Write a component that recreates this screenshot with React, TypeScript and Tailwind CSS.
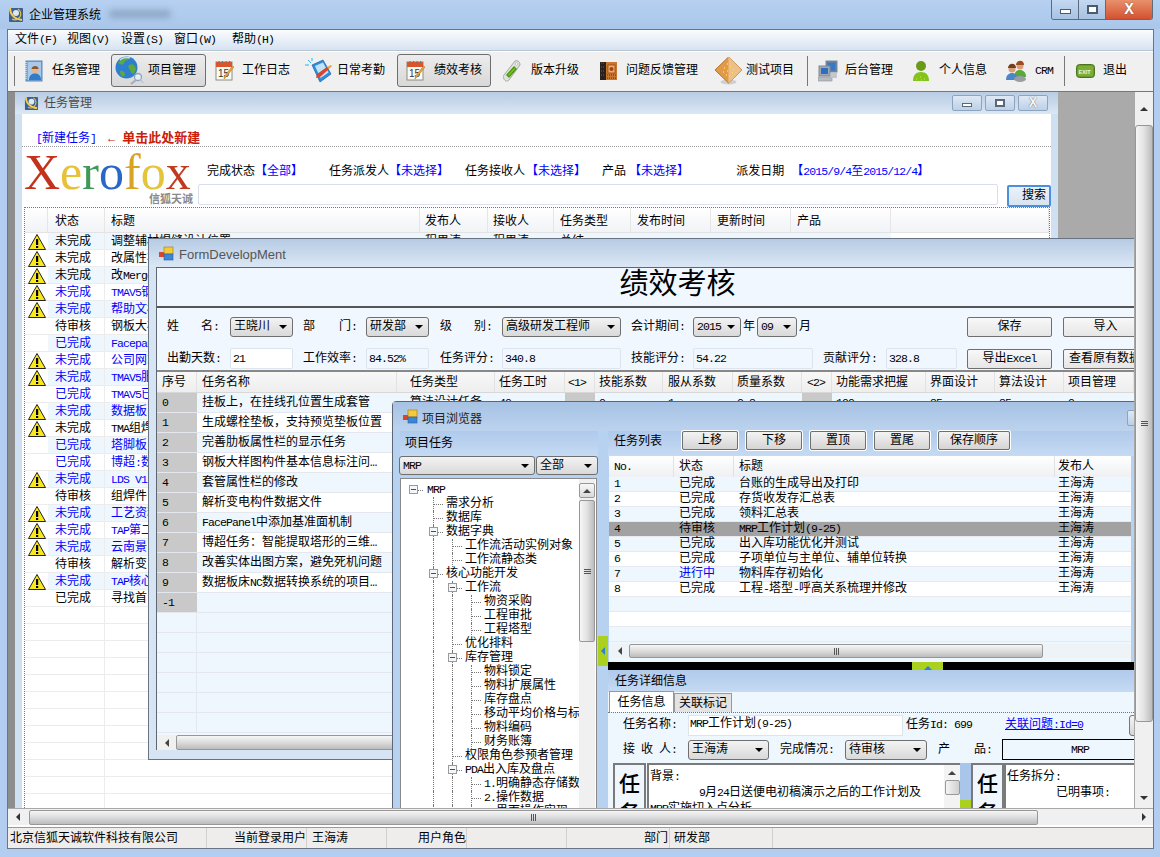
import React from "react";

const T = ({ s }: { s: string }) => (
  <>
    {s.split(/([\x20-\x7e]+)/).map((p, i) =>
      i % 2 === 1 ? (
        <span key={i} className="text-[11.5px] tracking-[-0.9px] whitespace-pre">{p}</span>
      ) : (
        <span key={i}>{p}</span>
      )
    )}
  </>
);

const Tri = ({ d = "down", className = "" }: { d?: "down" | "up" | "left" | "right"; className?: string }) => {
  const pts = { down: "0,0 8,0 4,4", up: "0,4 8,4 4,0", left: "5,0 5,8 1,4", right: "1,0 1,8 5,4" }[d];
  const vb = d === "down" || d === "up" ? "0 0 8 4" : "0 0 6 8";
  const cl = d === "down" || d === "up" ? "w-[8px] h-[4px]" : "w-[6px] h-[8px]";
  return (
    <svg viewBox={vb} className={cl + " shrink-0 " + className}>
      <polygon points={pts} fill="currentColor" />
    </svg>
  );
};

const AppIcon = ({ size = 16 }: { size?: number }) => (
  <svg width={size} height={size} viewBox="0 0 16 16" className="shrink-0">
    <rect x="1" y="1" width="14" height="14" rx="1" fill="#3d5f92" />
    <circle cx="8" cy="6" r="3" fill="#dfe7f2" />
    <path d="M2 1c0 6 4 11 12 12" stroke="#f3d24a" strokeWidth="2" fill="none" />
    <path d="M10 2c3 2 4 6 1 9-2 2-5 2-7 1" stroke="#e3c33a" strokeWidth="1.2" fill="none" />
  </svg>
);

const FormIcon = () => (
  <svg width="15" height="15" viewBox="0 0 15 15" className="shrink-0">
    <rect x="0" y="6" width="5" height="5" fill="#d8452c" />
    <rect x="5" y="1" width="9" height="7" fill="#f4c93a" stroke="#9a7b20" strokeWidth="0.6" />
    <rect x="5" y="8" width="9" height="6" fill="#3e86d4" stroke="#2a5c96" strokeWidth="0.6" />
  </svg>
);

const LedgerIcon = () => (
  <svg width="18" height="22" viewBox="0 0 18 22">
    <rect x="1" y="1" width="16" height="20" fill="#79a8dc" stroke="#5c86b8" />
    <rect x="3" y="2" width="13" height="18" fill="#a9c9ec" />
    <path d="M1 2v18" stroke="#fff" strokeDasharray="1 1" />
    <circle cx="10" cy="10" r="3.4" fill="#e8b48a" />
    <path d="M6.6 9c0-4 7-4 7 0z" fill="#8a5a2a" />
    <path d="M4 20c0-5 3-6.500 6-6.500s6 1.500 6 6.500z" fill="#2f7cc8" />
  </svg>
);
const GlobeIcon = () => (
  <svg width="30" height="30" viewBox="0 0 30 30">
    <circle cx="11.500" cy="11.500" r="11" fill="#2f7fd0" />
    <path d="M3 7c3-5 8-6 11-5-1 3-4 2-5 5s-4 1-6 0zM14 9c3-2 6 0 7 4-1 5-4 6-5 3s-4-4-2-7zM5 15c3-1 5 1 5 4l-2 2c-2-1-3-3-3-6z" fill="#5fa83a" />
    <path d="M5 4c3-3 8-3 10-2" stroke="#bfe0f8" strokeWidth="1.500" fill="none" />
    <circle cx="23" cy="21" r="3.500" fill="#e6eef6" stroke="#8fa3b8" strokeWidth="1.300" />
    <path d="M21 24l-5 4" stroke="#9fb0c2" strokeWidth="2.200" />
    <path d="M25 24c2 1 3 2 3 3" stroke="#b8c6d4" strokeWidth="1.500" fill="none" />
  </svg>
);
const CalIcon = () => (
  <svg width="20" height="22" viewBox="0 0 20 22">
    <rect x="1" y="2" width="16" height="18" fill="#fbfbf6" stroke="#8c8c80" />
    <rect x="1" y="2" width="16" height="5" fill="#d8562a" />
    <path d="M4 1v3M7.500 1v3M11 1v3M14.500 1v3" stroke="#777" strokeWidth="1" />
    <text x="3" y="17" fontSize="10" fill="#333" fontFamily="Liberation Sans">15</text>
    <path d="M19 7l-8 10-2 2 .5-3 8-10z" fill="#f0a238" stroke="#b06c18" strokeWidth="0.500" />
  </svg>
);
const NoteIcon = () => (
  <svg width="28" height="26" viewBox="0 0 28 26">
    <path d="M3 2l3 3M0 7h4M7 0v3" stroke="#33b0ea" strokeWidth="1" />
    <path d="M7 7l11-5 8 14-11 8z" fill="#2f8fdc" stroke="#1e5ea0" strokeWidth="0.700" />
    <path d="M10 8l8-3.500 5.500 10-8 5.500z" fill="#bfe4fa" />
    <path d="M12 16l10-7 2 2-9 8-4 1z" fill="#d8452c" />
    <path d="M22 9l4-2 1 1-3 3z" fill="#f0a238" />
  </svg>
);
const TagIcon = () => (
  <svg width="18" height="22" viewBox="0 0 18 22">
    <path d="M12 1c3-1 5 1 5 4L6 20c-2 2-4 1-5-1s-1-3 0-4z" fill="#dfe3df" stroke="#a4a8a4" />
    <path d="M11 7l2 2-7 8-2-2z" fill="#7cc422" stroke="#4f9a10" strokeWidth="1.500" />
    <circle cx="13.500" cy="4" r="1.300" fill="#fff" stroke="#999" strokeWidth="0.500" />
  </svg>
);
const BookIcon = () => (
  <svg width="18" height="22" viewBox="0 0 18 22">
    <rect x="0" y="2" width="6" height="18" fill="#2a201c" />
    <path d="M1 3h4M1 7h4M1 11h4M1 15h4" stroke="#c43a20" strokeDasharray="1 1" />
    <rect x="6" y="2" width="11" height="18" fill="#c9762e" />
    <rect x="8" y="5" width="7" height="8" fill="#e8b060" stroke="#8e3a18" strokeWidth="0.700" />
    <path d="M7 15h9M7 18h9" stroke="#6e2414" strokeDasharray="1 1" />
    <circle cx="11.500" cy="9" r="2" fill="#b23a1e" />
  </svg>
);
const DiamondIcon = () => (
  <svg width="27" height="28" viewBox="0 0 27 28">
    <ellipse cx="13.500" cy="25" rx="8" ry="2.500" fill="#cfcfcf" />
    <polygon points="13.500,0 27,13 13.500,26 0,13" fill="#e19a4c" stroke="#b8742c" />
    <polygon points="13.500,0 27,13 13.500,26" fill="#edc08a" />
    <path d="M12 7h1M9 11h1M15 10h1M12 14h1M18 13h1M8 15h1M14 19h1M17 16h1M11 18h1" stroke="#f6e13a" strokeWidth="1.500" />
  </svg>
);
const PCIcon = () => (
  <svg width="20" height="22" viewBox="0 0 20 22">
    <rect x="8" y="1" width="11" height="11" fill="#5e7ea6" stroke="#7c8ba0" />
    <rect x="10" y="3" width="7" height="7" fill="#3678c4" />
    <rect x="1" y="6" width="11" height="10" fill="#a0aab6" stroke="#7c8794" />
    <rect x="3" y="8" width="7" height="6" fill="#2e6ebc" />
    <rect x="0" y="17" width="14" height="4" fill="#b8bcc2" stroke="#8e9298" strokeWidth="0.600" />
    <rect x="13" y="13" width="6" height="5" fill="#c4c8cc" />
  </svg>
);
const PersonIcon = () => (
  <svg width="18" height="22" viewBox="0 0 18 22">
    <circle cx="9" cy="6" r="5" fill="#6a9a1a" />
    <path d="M1 21c0-6 3-9 8-9s8 3 8 9z" fill="#82c41a" />
    <path d="M4 19h1M8 17h1M12 19h1M9 20h1" stroke="#d6e83a" strokeWidth="1.200" />
  </svg>
);
const CrmIcon = () => (
  <svg width="22" height="24" viewBox="0 0 22 24">
    <circle cx="15" cy="7" r="3.500" fill="#d8a07a" />
    <path d="M11 6c0-5 8-6 8 0z" fill="#a04a22" />
    <path d="M9 18c0-5 3-7 6-7s6 2 6 7z" fill="#5aa83a" />
    <circle cx="7" cy="10" r="3.500" fill="#d8a07a" />
    <path d="M3 9c0-5 8-6 8 0z" fill="#6e4020" />
    <path d="M1 21c0-5 3-7 6-7s6 2 6 7z" fill="#4a86c8" />
    <ellipse cx="15" cy="20" rx="6" ry="3" fill="#9a9ea4" />
  </svg>
);
const ExitIcon = () => (
  <svg width="19" height="16" viewBox="0 0 19 16">
    <rect x="0.500" y="1.500" width="18" height="13" rx="3" fill="#6a9a30" stroke="#4c7420" />
    <rect x="2" y="3" width="15" height="10" rx="1" fill="#7cae34" />
    <text x="2.500" y="10.500" fontSize="5.500" fontWeight="700" fill="#f3f3d0" fontFamily="Liberation Sans">EXIT</text>
  </svg>
);

const tools = [
  { c: "w-[92px] pl-[6px]", ic: "w-[27px]", i: <LedgerIcon />, t: "任务管理" },
  { c: "w-[95px] pl-[3px] border border-[#6e6e6e] rounded-[3px] bg-linear-to-b from-[#ececec] to-[#d8d8d8]", ic: "w-[33px]", i: <GlobeIcon />, t: "项目管理" },
  { c: "w-[91px] pl-[9px]", ic: "w-[27px]", i: <CalIcon />, t: "工作日志" },
  { c: "w-[100px] pl-[8px]", ic: "w-[32px]", i: <NoteIcon />, t: "日常考勤" },
  { c: "w-[94px] pl-[8px] border border-[#6e6e6e] rounded-[3px] bg-linear-to-b from-[#ececec] to-[#d8d8d8]", ic: "w-[28px]", i: <CalIcon />, t: "绩效考核" },
  { c: "w-[101px] pl-[12px]", ic: "w-[28px]", i: <TagIcon />, t: "版本升级" },
  { c: "w-[115px] pl-[8px]", ic: "w-[26px]", i: <BookIcon />, t: "问题反馈管理" },
  { c: "w-[97px] pl-[8px]", ic: "w-[31px]", i: <DiamondIcon />, t: "测试项目" },
  { sep: "ml-[3px]" },
  { c: "w-[97px] pl-[10px]", ic: "w-[27px]", i: <PCIcon />, t: "后台管理" },
  { c: "w-[93px] pl-[7px]", ic: "w-[27px]", i: <PersonIcon />, t: "个人信息" },
  { c: "w-[64px] pl-[7px]", ic: "w-[30px]", i: <CrmIcon />, t: "CRM" },
  { sep: "ml-[2px]" },
  { c: "w-[75px] pl-[11px]", ic: "w-[27px]", i: <ExitIcon />, t: "退出" },
] as any[];

const Menu = [
  ["w-[52px]", "文件(F)"],
  ["w-[54px]", "视图(V)"],
  ["w-[53px]", "设置(S)"],
  ["w-[58px]", "窗口(W)"],
  ["w-[60px]", "帮助(H)"],
];

const GlassBtn = ({ kind }: { kind: "min" | "max" | "close" }) => (
  <div className="w-[30px] h-[16px] border border-[#8ea3bd] rounded-[2px] bg-linear-to-b from-[#dfe9f5] to-[#bcd0e6] flex items-center justify-center shrink-0">
    {kind === "min" && <div className="w-[10px] h-[4px] border border-[#59677a] bg-white mt-[3px]" />}
    {kind === "max" && <div className="w-[10px] h-[8px] border-2 border-[#59677a] bg-white" />}
    {kind === "close" && <span className="text-[14px] font-bold leading-none text-[#f5f8fb] [text-shadow:0_0_1px_#333]">X</span>}
  </div>
);

const ThumbH = ({ className = "" }: { className?: string }) => (
  <div className={"h-[15px] border border-[#979797] rounded-[2px] bg-linear-to-b from-[#f6f6f6] via-[#dcdcdc] to-[#bcbcbc] flex items-center justify-center gap-[1px] " + className}>
    <div className="w-[1px] h-[7px] bg-[#555]" />
    <div className="w-[1px] h-[7px] bg-[#555]" />
    <div className="w-[1px] h-[7px] bg-[#555]" />
  </div>
);
const ThumbV = ({ className = "" }: { className?: string }) => (
  <div className={"w-full border border-[#979797] rounded-[2px] bg-linear-to-r from-[#f6f6f6] via-[#e2e2e2] to-[#bcbcbc] flex flex-col items-center justify-center gap-[1px] " + className}>
    <div className="h-[1px] w-[7px] bg-[#555]" />
    <div className="h-[1px] w-[7px] bg-[#555]" />
    <div className="h-[1px] w-[7px] bg-[#555]" />
  </div>
);

const Sel = ({ s, className = "" }: { s: string; className?: string }) => (
  <div className={"h-[20px] shrink-0 flex items-center justify-between pl-[3px] pr-[5px] border border-[#6f6f6f] rounded-[3px] bg-linear-to-b from-[#f3f3f3] to-[#d9d9d9] whitespace-nowrap overflow-hidden " + className}>
    <span><T s={s} /></span>
    <Tri className="text-black" />
  </div>
);
const Btn = ({ s, className = "" }: { s: string; className?: string }) => (
  <div className={"shrink-0 flex items-center justify-center border border-[#6f6f6f] rounded-[2px] bg-linear-to-b from-[#f8f8f8] to-[#e6e6e6] whitespace-nowrap overflow-hidden " + className}>
    <T s={s} />
  </div>
);
const Lbl = ({ s, className = "" }: { s: string; className?: string }) => (
  <div className={"shrink-0 whitespace-nowrap " + className}><T s={s} /></div>
);
const Inp = ({ s, className = "" }: { s: string; className?: string }) => (
  <div className={"h-[21px] shrink-0 flex items-center pl-[2px] border border-[#dce4ee] rounded-[2px] " + className}><T s={s} /></div>
);

const Warn = () => (
  <svg width="18" height="16" viewBox="0 0 18 16" className="shrink-0">
    <polygon points="9,0.500 17.500,15.500 0.500,15.500" fill="#f8e81c" stroke="#222" strokeWidth="1" />
    <rect x="8" y="5" width="2.200" height="6" fill="#000" />
    <rect x="8" y="12" width="2.200" height="2" fill="#000" />
  </svg>
);

const taskCols = ["w-[23px]", "w-[57px] pl-[7px]", "w-[315px] pl-[6px]", "w-[68px] pl-[5px]", "w-[66px] pl-[5px]", "w-[77px] pl-[6px]", "w-[80px] pl-[6px]", "w-[80px] pl-[6px]", "w-[100px] pl-[6px]", "flex-1"];
const taskHead = ["", "状态", "标题", "发布人", "接收人", "任务类型", "发布时间", "更新时间", "产品", ""];
const taskRows: [boolean, string, string, boolean][] = [
  [true, "未完成", "调整辅材焊缝设计位置", false],
  [true, "未完成", "改属性栏", false],
  [true, "未完成", "改Merge", false],
  [true, "未完成", "TMAV5钢", true],
  [true, "未完成", "帮助文档", true],
  [false, "待审核", "钢板大样", false],
  [false, "已完成", "Facepanel", true],
  [true, "未完成", "公司网站", true],
  [true, "未完成", "TMAV5服", true],
  [false, "已完成", "TMAV5已", true],
  [true, "未完成", "数据板", true],
  [true, "未完成", "TMA组焊", false],
  [false, "已完成", "塔脚板", true],
  [false, "已完成", "博超:数", true],
  [true, "未完成", "LDS V1", true],
  [false, "待审核", "组焊件", false],
  [true, "未完成", "工艺资料", true],
  [true, "未完成", "TAP第二", true],
  [true, "未完成", "云南景", true],
  [false, "待审核", "解析变电", false],
  [true, "未完成", "TAP核心", true],
  [false, "已完成", "寻找首", false],
];

const formHead = ["序号", "任务名称", "任务类型", "任务工时", "<1>", "技能系数", "服从系数", "质量系数", "<2>", "功能需求把握", "界面设计", "算法设计", "项目管理"];
const formCols2 = ["w-[40px] pl-[5px]", "w-[200px] pl-[5px]", "w-[98px] pl-[13px]", "w-[70px] pl-[4px]", "w-[30px] pl-[3px]", "w-[68px] pl-[4px]", "w-[70px] pl-[5px]", "w-[69px] pl-[4px]", "w-[30px] pl-[5px]", "w-[94px] pl-[4px]", "w-[69px] pl-[4px]", "w-[69px] pl-[4px]", "w-[70px] pl-[4px]"];
const names = [
  "挂板上，在挂线孔位置生成套管",
  "生成螺栓垫板，支持预览垫板位置",
  "完善肋板属性栏的显示任务",
  "钢板大样图构件基本信息标注问…",
  "套管属性栏的修改",
  "解析变电构件数据文件",
  "FacePanel中添加基准面机制",
  "博超任务：智能提取塔形的三维…",
  "改善实体出图方案，避免死机问题",
  "数据板床NC数据转换系统的项目…",
  "",
];
const firstRow = ["算法设计任务", "40", "", "0", "1", "0.8", "", "100", "85", "85", "0"];

const tree: [number, string, boolean?][] = [
  [0, "MRP", true],
  [1, "需求分析"],
  [1, "数据库"],
  [1, "数据字典", true],
  [2, "工作流活动实例对象"],
  [2, "工作流静态类"],
  [1, "核心功能开发", true],
  [2, "工作流", true],
  [3, "物资采购"],
  [3, "工程审批"],
  [3, "工程塔型"],
  [2, "优化排料"],
  [2, "库存管理", true],
  [3, "物料锁定"],
  [3, "物料扩展属性"],
  [3, "库存盘点"],
  [3, "移动平均价格与标准价"],
  [3, "物料编码"],
  [3, "财务账簿"],
  [2, "权限角色参预者管理"],
  [2, "PDA出入库及盘点", true],
  [3, "1.明确静态存储数据"],
  [3, "2.操作数据"],
  [3, "3.界面操作实现"],
];

const listRows = [
  ["1", "已完成", "台账的生成导出及打印"],
  ["2", "已完成", "存货收发存汇总表"],
  ["3", "已完成", "领料汇总表"],
  ["4", "待审核", "MRP工作计划(9-25)"],
  ["5", "已完成", "出入库功能优化并测试"],
  ["6", "已完成", "子项单位与主单位、辅单位转换"],
  ["7", "进行中", "物料库存初始化"],
  ["8", "已完成", "工程-塔型-呼高关系梳理并修改"],
  ["", "", ""],
  ["", "", ""],
  ["", "", ""],
];

const BigLabel = () => (
  <div className="w-[33px] shrink-0 border-2 border-[#7a7a7a] bg-[#eff6fe] flex flex-col items-center pt-[6px] text-[21px] leading-[29px] text-black font-medium overflow-hidden">
    <span>任</span>
    <span>务</span>
  </div>
);

const TaskWindow = () => (
  <div className="absolute left-0 top-0 w-[1050px] h-[760px] flex">
    <div className="w-[7px] bg-[#8d8d8d] shrink-0" />
    <div className="flex-1 flex flex-col bg-[#cfe0f3] min-w-0">
      <div className="h-[22px] shrink-0 flex items-center pl-[9px] bg-linear-to-b from-[#b8cce3] to-[#dbe7f5]">
        <AppIcon size={15} />
        <span className="ml-[5px] text-[#4a4a4a] pt-[1px]">任务管理</span>
        <div className="ml-auto flex gap-[3px] pr-[10px]">
          <GlassBtn kind="min" />
          <GlassBtn kind="max" />
          <GlassBtn kind="close" />
        </div>
      </div>
      <div className="flex-1 mx-[7px] bg-white flex flex-col min-h-0 overflow-hidden">
        <div className="h-[33px] shrink-0 flex items-end pl-[14px] border-b border-dotted border-[#999]">
          <span className="text-[#0000ff]"><T s="[新建任务]" /></span>
          <span className="ml-[12px] text-[#c8200a] font-bold">←</span>
          <span className="ml-[7px] text-[#c8200a] font-bold text-[13px]">单击此处新建</span>
        </div>
        <div className="h-[60px] shrink-0 flex">
          <div className="w-[174px] ml-[2px] shrink-0 flex flex-col">
            <div className="font-['Liberation_Serif',serif] text-[50px] leading-[46px] mt-[2px] tracking-[0px] whitespace-nowrap">
              <span className="text-[#c4321c]">X</span>
              <span className="text-[#e6c23a]">e</span>
              <span className="text-[#3f9a5a]">r</span>
              <span className="text-[#2a68c8]">o</span>
              <span className="text-[#d9a521]">f</span>
              <span className="text-[#e4c43a]">o</span>
              <span className="text-[#c03a22]">x</span>
            </div>
            <div className="text-right pr-[5px] text-[11px] leading-[11px] font-bold text-[#8a8a8a]">信狐天诚</div>
          </div>
          <div className="flex-1 flex flex-col min-w-0">
            <div className="flex mt-[18px] h-[14px] pl-[9px] whitespace-nowrap">
              <span>完成状态</span>
              <span className="text-[#0000ff] mr-[26px]">【全部】</span>
              <span>任务派发人</span>
              <span className="text-[#0000ff] mr-[16px]">【未选择】</span>
              <span>任务接收人</span>
              <span className="text-[#0000ff] ml-[1px] mr-[16px]">【未选择】</span>
              <span>产品</span>
              <span className="text-[#0000ff] ml-[3px] mr-[47px]">【未选择】</span>
              <span>派发日期</span>
              <span className="text-[#0000ff] ml-[7px]"><T s="【2015/9/4至2015/12/4】" /></span>
            </div>
            <div className="flex mt-[5px]">
              <div className="w-[802px] h-[21px] border border-[#d6dfeb] rounded-[2px] bg-white" />
              <div className="ml-[9px] w-[44px] h-[22px] mt-[1px] border-2 border-[#4a90dc] rounded-[2px] bg-linear-to-b from-[#eaf2fb] to-[#d8e4f0] pl-[13px] flex items-center whitespace-nowrap">搜索</div>
            </div>
          </div>
        </div>
        <div className="ml-[2px] w-[1026px] flex-1 border border-dotted border-[#777] border-b-0 min-h-0 overflow-hidden">
          <div className="h-[25px] flex items-center bg-linear-to-b from-white to-[#f1f3f6] border-b border-[#e3e3e3]">
            {taskHead.map((h, i) => (
              <div key={i} className={"h-full flex items-center pt-[3px] border-r border-[#e6e6e6] " + taskCols[i]}>{h}</div>
            ))}
          </div>
          {Array.from({ length: 34 }).map((_, r) => {
            const row = taskRows[r];
            const alt = row && r % 2 === 0;
            return (
              <div key={r} className={"h-[17px] flex border-b border-[#ececec] " + (row && row[3] ? "text-[#0000ff]" : "text-black")}>
                <div className={"h-full flex items-center justify-center pt-[1px] " + taskCols[0]}>{row && row[0] && <Warn />}</div>
                <div className={"h-full flex items-center pt-[1px] border-r border-[#ececec] " + taskCols[1] + (alt ? " bg-[#eef6fe]" : "")}>{row && row[1]}</div>
                <div className={"h-full flex items-center pt-[1px] " + taskCols[2] + (alt ? " bg-[#eef6fe]" : "")}>{row && <T s={row[2]} />}</div>
                <div className={"h-full flex items-center pt-[1px] " + taskCols[3] + (alt ? " bg-[#eef6fe]" : "")}>{r === 0 && "程思涛"}</div>
                <div className={"h-full flex items-center pt-[1px] " + taskCols[4] + (alt ? " bg-[#eef6fe]" : "")}>{r === 0 && "程思涛"}</div>
                <div className={"h-full flex items-center pt-[1px] " + taskCols[5] + (alt ? " bg-[#eef6fe]" : "")}>{r === 0 && "总结"}</div>
                <div className={"h-full " + taskCols[6] + (alt ? " bg-[#eef6fe]" : "")} />
                <div className={"h-full " + taskCols[7] + (alt ? " bg-[#eef6fe]" : "")} />
                <div className={"h-full " + taskCols[8] + (alt ? " bg-[#eef6fe]" : "")} />
              </div>
            );
          })}
        </div>
      </div>
    </div>
  </div>
);

const FormWindow = () => (
  <div className="absolute left-[140px] top-[146px] w-[1059px] h-[522px] border border-[#687484] bg-[#d6e4f4] flex flex-col">
    <div className="h-[28px] shrink-0 flex items-center pl-[10px] bg-linear-to-b from-[#b6cbe3] to-[#dbe7f5]">
      <FormIcon />
      <span className="ml-[5px] pt-[3px] font-['Liberation_Sans',sans-serif] text-[13px] text-[#555] whitespace-nowrap">FormDevelopMent</span>
      <div className="ml-[928px]"><GlassBtn kind="min" /></div>
    </div>
    <div className="ml-[7px] mr-[8px] h-[483px] border-t border-l border-[#5e6875] bg-[#f0f7ff] flex flex-col overflow-hidden">
      <div className="h-[40px] shrink-0 border-b-[2px] border-[#555] flex items-center justify-center text-[29px] leading-[36px] text-black">绩效考核</div>
      <div className="mt-[9px] h-[20px] shrink-0 flex items-center pl-[10px] whitespace-nowrap">
        <div className="w-[53px] mr-[10px] flex justify-between shrink-0"><span>姓</span><span className="mr-[1px]"><T s="名:" /></span></div>
        <Sel s="王晓川" className="w-[63px] mr-[10px]" />
        <div className="w-[54px] mr-[9px] flex justify-between shrink-0"><span>部</span><span><T s="门:" /></span></div>
        <Sel s="研发部" className="w-[63px] mr-[11px]" />
        <div className="w-[52px] mr-[10px] flex justify-between shrink-0"><span>级</span><span><T s="别:" /></span></div>
        <Sel s="高级研发工程师" className="w-[119px] mr-[10px]" />
        <Lbl s="会计期间:" className="w-[54px] mr-[8px]" />
        <Sel s="2015" className="w-[48px] mr-[2px]" />
        <Lbl s="年" className="w-[12px] mr-[2px]" />
        <Sel s="09" className="w-[40px] mr-[2px]" />
        <Lbl s="月" className="w-[12px] mr-[156px]" />
        <Btn s="保存" className="w-[85px] h-[20px] mr-[11px]" />
        <Btn s="导入" className="w-[85px] h-[20px]" />
      </div>
      <div className="mt-[11px] h-[21px] shrink-0 flex items-center pl-[10px] whitespace-nowrap">
        <Lbl s="出勤天数:" className="w-[53px] mr-[10px]" />
        <Inp s="21" className="w-[63px] mr-[10px] bg-white" />
        <Lbl s="工作效率:" className="w-[54px] mr-[9px]" />
        <Inp s="84.52%" className="w-[63px] mr-[11px]" />
        <Lbl s="任务评分:" className="w-[52px] mr-[10px]" />
        <Inp s="340.8" className="w-[119px] mr-[10px]" />
        <Lbl s="技能评分:" className="w-[54px] mr-[8px]" />
        <Inp s="54.22" className="w-[120px] mr-[10px]" />
        <Lbl s="贡献评分:" className="w-[54px] mr-[9px]" />
        <Inp s="328.8" className="w-[71px] mr-[10px]" />
        <Btn s="导出Excel" className="w-[85px] h-[20px] mr-[11px]" />
        <Btn s="查看原有数据" className="w-[85px] h-[20px] justify-start pl-[5px]" />
      </div>
      <div className="mt-[1px] h-[364px] shrink-0 border-t-2 border-[#888] flex flex-col">
        <div className="h-[21px] shrink-0 flex bg-linear-to-b from-[#f8f8f8] to-[#eeeeee] border-b border-[#d8d8d8]">
          {formHead.map((h, i) => (
            <div key={i} className={"shrink-0 h-full flex items-center pt-[1px] border-r border-[#e2e2e2] whitespace-nowrap " + formCols2[i]}><T s={h} /></div>
          ))}
        </div>
        {Array.from({ length: 17 }).map((_, r) => (
          <div key={r} className={"h-[20px] shrink-0 flex border-b border-[#e4e8ee] " + (r % 2 === 0 || r > 10 ? "bg-[#eef6fe]" : "bg-white")}>
            <div className={"shrink-0 h-full flex items-center " + formCols2[0] + (r <= 10 ? " bg-[#c9c9c9]" : " border-r border-[#e4e8ee]")}>{r <= 10 ? <T s={r === 10 ? "-1" : String(r)} /> : null}</div>
            <div className={"shrink-0 h-full flex items-center whitespace-nowrap " + formCols2[1]}><T s={names[r] || ""} /></div>
            {r === 0 && firstRow.map((v, i) => (
              <div key={i} className={"shrink-0 h-full flex items-center whitespace-nowrap " + formCols2[i + 2] + (v === "" ? " bg-[#c9c9c9]" : "")}><T s={v} /></div>
            ))}
          </div>
        ))}
        <div className="mt-[2px] h-[15px] shrink-0 flex items-center bg-[#f0f0f0]">
          <div className="w-[19px] flex justify-center text-[#444]"><Tri d="left" /></div>
          <ThumbH className="w-[900px]" />
        </div>
      </div>
    </div>
  </div>
);

const TreeRow = ({ l, s, e }: { l: number; s: string; e?: boolean }) => (
  <div className="h-[14px] flex pl-[13px] whitespace-nowrap">
    {l > 0 && <div className="w-[19px] shrink-0" />}
    {Array.from({ length: Math.max(l - 1, 0) }).map((_, i) => (
      <div key={i} className="w-[19px] shrink-0 h-full border-l border-dotted border-[#777]" />
    ))}
    <div className={"relative shrink-0 w-[12px] h-full flex items-center " + (l > 0 ? "border-l border-dotted border-[#777]" : "")}>
      <div className="w-[9px] border-t border-dotted border-[#777]" />
      {e && (
        <div className="absolute -left-[5px] top-[2px] w-[9px] h-[9px] border border-[#9a9a9a] bg-[#f4f7fa] flex items-center justify-center">
          <div className="w-[5px] h-[1px] bg-[#2050b0]" />
        </div>
      )}
    </div>
    <span className="ml-[1px]"><T s={s} /></span>
  </div>
);

const BrowserWindow = () => (
  <div className="absolute left-[384px] top-[309px] w-[800px] h-[440px] border border-[#5e6875] rounded-t-[4px] bg-[#b7d1f1] flex flex-col">
    <div className="h-[29px] shrink-0 flex items-center pl-[10px] bg-linear-to-b from-[#a6c2e4] to-[#bcd3ee]">
      <FormIcon />
      <span className="ml-[4px] text-[#222] mt-[6px]">项目浏览器</span>
      <div className="ml-[645px] mt-[3px]"><GlassBtn kind="min" /></div>
    </div>
    <div className="flex-1 flex pl-[6px] min-h-0">
      <div className="w-[199px] shrink-0 flex flex-col">
        <div className="h-[25px] shrink-0 flex items-center pl-[5px] ml-[1px] bg-linear-to-b from-[#b0caec] to-[#c5daf3]">项目任务</div>
        <div className="flex gap-[1px] h-[18px] shrink-0">
          <Sel s="MRP" className="w-[136px] !h-[19px]" />
          <Sel s="全部" className="w-[62px] !h-[19px]" />
        </div>
        <div className="mt-[4px] ml-[1px] w-[197px] flex-1 border border-[#8a8a8a] bg-white flex min-h-0 overflow-hidden">
          <div className="w-[178px] shrink-0 pt-[4px] overflow-hidden">
            {tree.map(([l, s, e], i) => <TreeRow key={i} l={l} s={s} e={e} />)}
          </div>
          <div className="w-[16px] shrink-0 pt-[4px] flex flex-col bg-[#f0f0f0]">
            <div className="h-[15px] border border-[#979797] rounded-[2px] bg-linear-to-b from-[#f8f8f8] to-[#dadada] flex items-center justify-center text-[#444]"><Tri d="up" /></div>
            <ThumbV className="h-[142px] mt-[2px]" />
          </div>
        </div>
      </div>
      <div className="w-[10px] shrink-0 flex flex-col pt-[205px]">
        <div className="h-[30px] w-[10px] bg-[#a9d11e] flex items-center justify-center text-[#2f7fd6]"><Tri d="left" /></div>
      </div>
      <div className="w-[570px] shrink-0 flex flex-col">
        <div className="h-[25px] shrink-0 flex items-start bg-linear-to-b from-[#b0caec] to-[#c5daf3]">
          <span className="ml-[6px] mt-[4px] w-[68px]">任务列表</span>
          <Btn s="上移" className="w-[56px] h-[19px] mr-[8px] !from-[#f3f3f3] !to-[#d5d5d5] ring-1 ring-white" />
          <Btn s="下移" className="w-[56px] h-[19px] mr-[8px] !from-[#f3f3f3] !to-[#d5d5d5] ring-1 ring-white" />
          <Btn s="置顶" className="w-[56px] h-[19px] mr-[8px] !from-[#f3f3f3] !to-[#d5d5d5] ring-1 ring-white" />
          <Btn s="置尾" className="w-[56px] h-[19px] mr-[8px] !from-[#f3f3f3] !to-[#d5d5d5] ring-1 ring-white" />
          <Btn s="保存顺序" className="w-[72px] h-[19px] !from-[#f3f3f3] !to-[#d5d5d5] ring-1 ring-white" />
        </div>
        <div className="ml-[1px] w-[522px] h-[188px] shrink-0 bg-[#eef6fe] flex flex-col overflow-hidden">
          <div className="h-[21px] shrink-0 flex items-center bg-linear-to-b from-white to-[#eef0f3]">
            <div className="w-[65px] pl-[5px] border-r border-[#e2e2e2] h-full flex items-center"><T s="No." /></div>
            <div className="w-[60px] pl-[5px] border-r border-[#e2e2e2] h-full flex items-center">状态</div>
            <div className="w-[321px] pl-[5px] border-r border-[#e2e2e2] h-full flex items-center">标题</div>
            <div className="w-[76px] pl-[3px] h-full flex items-center">发布人</div>
          </div>
          {listRows.map((r, i) => (
            <div key={i} className={"h-[15px] shrink-0 flex items-center border-b border-[#e6eaf0] " + (i === 3 ? "bg-[#a2a2a2]" : i % 2 === 0 ? "bg-[#eef6fe]" : "bg-white")}>
              <div className="w-[65px] pl-[5px]"><T s={r[0]} /></div>
              <div className={"w-[60px] pl-[5px] " + (i === 6 ? "text-[#0000ff]" : "")}>{r[1]}</div>
              <div className="w-[321px] pl-[5px] whitespace-nowrap"><T s={r[2]} /></div>
              <div className="w-[76px] pl-[3px]">{r[0] && "王海涛"}</div>
            </div>
          ))}
        </div>
        <div className="ml-[1px] w-[522px] h-[14px] shrink-0 flex items-center bg-[#eef3f8] pl-[8px]">
          <div className="w-[12px] text-[#444]"><Tri d="left" /></div>
          <ThumbH className="w-[414px] !h-[14px]" />
        </div>
        <div className="h-[4px] shrink-0 ml-[1px] w-[522px] bg-[#eef6fe]" />
        <div className="h-[8px] shrink-0 bg-black flex">
          <div className="ml-[304px] w-[31px] h-full bg-[#a9d11e] flex items-end justify-center text-[#2f7fd6]"><Tri d="up" /></div>
        </div>
        <div className="h-[22px] shrink-0 flex items-center pl-[7px] pt-[2px] bg-linear-to-b from-[#b0caec] to-[#c5daf3]">任务详细信息</div>
        <div className="h-[21px] shrink-0 flex items-end border-b border-dotted border-[#777] bg-[#eef6fe]">
          <div className="ml-[1px] w-[65px] h-[21px] pt-[2px] bg-white border border-b-0 border-[#999] flex items-center justify-center">任务信息</div>
          <div className="w-[58px] h-[19px] pt-[2px] bg-[#e3e3e3] border border-b-0 border-[#999] flex items-center justify-center">关联标记</div>
        </div>
        <div className="flex-1 pl-[5px] bg-[#eef6fe] flex flex-col">
          <div className="flex items-center h-[24px] shrink-0 pl-[10px] whitespace-nowrap">
            <Lbl s="任务名称:" className="w-[65px]" />
            <div className="w-[215px] h-[21px] shrink-0 bg-white border border-[#dce4ee] pl-[1px] pt-[1px]"><T s="MRP工作计划(9-25)" /></div>
            <Lbl s="任务Id: 699" className="ml-[3px] w-[99px]" />
            <span className="text-[#0000ff] underline w-[124px] shrink-0"><T s="关联问题:Id=0" /></span>
            <div className="w-[60px] h-[21px] border border-[#777] rounded-[3px] bg-linear-to-b from-[#f5f5f5] to-[#d5d5d5] shrink-0" />
          </div>
          <div className="flex items-center h-[25px] shrink-0 pl-[10px] whitespace-nowrap">
            <Lbl s="接 收 人:" className="w-[65px]" />
            <Sel s="王海涛" className="w-[81px] mr-[11px]" />
            <Lbl s="完成情况:" className="w-[65px]" />
            <Sel s="待审核" className="w-[82px] mr-[11px]" />
            <div className="w-[55px] flex justify-between shrink-0 pr-[1px] mr-[9px]"><span>产</span><span><T s="品:" /></span></div>
            <div className="w-[156px] h-[21px] border border-black bg-[#eef6fe] flex items-center justify-center shrink-0"><T s="MRP" /></div>
          </div>
          <div className="flex h-[60px] shrink-0 mt-[1px]">
            <BigLabel />
            <div className="ml-[1px] w-[313px] border-2 border-[#7a7a7a] border-r-0 bg-white flex shrink-0 overflow-hidden">
              <div className="flex-1 pt-[4px] leading-[16px] whitespace-nowrap">
                <div className="pl-[1px]"><T s="背景:" /></div>
                <div className="pl-[50px]"><T s="9月24日送便电初稿演示之后的工作计划及" /></div>
                <div className="pl-[1px]"><T s="MRP实施切入点分析" /></div>
              </div>
              <div className="w-[16px] shrink-0 bg-[#f3f3f3] flex flex-col items-center pt-[6px] text-[#444]">
                <Tri d="up" />
                <div className="mt-[5px] w-[15px] h-[15px] border border-[#999] rounded-[2px] bg-linear-to-r from-[#f5f5f5] to-[#cfcfcf]" />
              </div>
            </div>
            <div className="w-[11px] shrink-0 bg-[#a9c6ea] flex flex-col"><div className="mt-[37px] h-[10px] bg-[#a9d11e]" /></div>
            <BigLabel />
            <div className="w-[200px] border-2 border-[#7a7a7a] bg-white pt-[4px] leading-[16px] whitespace-nowrap shrink-0 overflow-hidden">
              <div className="pl-[1px]"><T s="任务拆分:" /></div>
              <div className="pl-[50px]"><T s="已明事项:" /></div>
            </div>
          </div>
        </div>
      </div>
    </div>
  </div>
);

const statusCells = [
  ["w-[199px] pl-[2px]", "北京信狐天诚软件科技有限公司"],
  ["w-[100px] pl-[27px]", "当前登录用户"],
  ["w-[80px] pl-[5px]", "王海涛"],
  ["w-[80px] pl-[31px]", "用户角色"],
  ["w-[100px]", ""],
  ["w-[103px] pl-[77px]", "部门"],
  ["w-[103px] pl-[4px]", "研发部"],
];

export default function App() {
  return (
    <div lang="zh-CN" className="relative w-[1160px] h-[857px] overflow-hidden bg-[#b2cdef] flex flex-col font-['Liberation_Mono','Noto_Sans_CJK_SC',monospace] text-[12px] leading-[14px] text-black">
      <div className="h-[29px] shrink-0 flex items-start pl-[8px] bg-linear-to-b from-[#b5d0f1] to-[#aac7ea]">
        <div className="mt-[7px]"><AppIcon /></div>
        <span className="ml-[5px] mt-[9px]">企业管理系统</span>
        <div className="ml-[8px] mt-[10px] w-[62px] h-[8px] rounded-full bg-[#8ea6c6] blur-[3px]" />
        <div className="ml-auto mr-[7px] flex h-[20px] border border-t-0 border-[#5d6b7d] rounded-b-[3px] overflow-hidden">
          <div className="w-[27px] border-r border-[#5d6b7d] flex items-center justify-center bg-linear-to-b from-[#c3d8f1] to-[#a8c2e2]"><div className="w-[11px] h-[5px] border border-[#4d5a6a] bg-white mt-[4px]" /></div>
          <div className="w-[27px] border-r border-[#5d6b7d] flex items-center justify-center bg-linear-to-b from-[#c3d8f1] to-[#a8c2e2]"><div className="w-[11px] h-[9px] border-2 border-[#4d5a6a] bg-white" /></div>
          <div className="w-[46px] flex items-center justify-center bg-linear-to-b from-[#e8906c] to-[#d2502e]"><span className="text-[16px] font-bold leading-none text-white [text-shadow:0_0_1px_#333]">X</span></div>
        </div>
      </div>

      <div className="ml-[7px] w-[1147px] h-[820px] shrink-0 border border-[#6a7482] flex flex-col bg-[#f0f0f0]">
        <div className="h-[21px] shrink-0 flex items-center pl-[7px] bg-linear-to-b from-[#fbfcfe] to-[#d6e3f1] border-b border-[#b8c4d2] whitespace-nowrap">
          {Menu.map(([w, s]) => (
            <div key={s} className={w + " shrink-0"}><T s={s} /></div>
          ))}
        </div>
        <div className="h-[41px] shrink-0 flex items-start pl-[6px] pt-[2px] border-t border-[#fff] border-b border-b-[#777] bg-[#f0f0f0]">
          <div className="w-[1px] h-[30px] mt-[2px] mr-[4px] bg-[#777] shrink-0" />
          {tools.map((t, i) =>
            t.sep ? (
              <div key={i} className={"w-[1px] h-[30px] mt-[2px] bg-[#777] shrink-0 " + t.sep} />
            ) : (
              <div key={i} className={"h-[33px] shrink-0 flex items-center whitespace-nowrap " + t.c}>
                <div className={"shrink-0 flex items-center " + t.ic}>{t.i}</div>
                <T s={t.t} />
              </div>
            )
          )}
        </div>
        <div className="h-[716px] shrink-0 flex">
          <div className="relative flex-1 bg-[#aaaaaa] overflow-hidden">
            <TaskWindow />
            <FormWindow />
            <BrowserWindow />
          </div>
          <div className="w-[19px] shrink-0 flex flex-col items-center bg-[#f0f0f0] border-l border-[#a8a8a8]">
            <div className="h-[33px] flex items-center justify-center text-[#333]"><Tri d="up" /></div>
            <ThumbV className="h-[597px] rounded-[3px]" />
            <div className="mt-auto mb-[8px] text-[#333]"><Tri d="down" /></div>
          </div>
        </div>
        <div className="h-[17px] shrink-0 flex items-center bg-[#f0f0f0] border-t border-[#a8a8a8]">
          <div className="w-[21px] pl-[7px] text-[#333]"><Tri d="left" /></div>
          <ThumbH className="w-[1009px]" />
          <div className="ml-auto mr-[6px] text-[#333]"><Tri d="right" /></div>
        </div>
        <div className="h-[2px] shrink-0 bg-white" />
        <div className="flex-1 flex items-stretch bg-[#efedeb] border-t border-[#999]">
          {statusCells.map(([c, s], i) => (
            <div key={i} className={"shrink-0 flex items-center pt-[2px] border-r border-[#d2d0ce] whitespace-nowrap " + c}>{s}</div>
          ))}
        </div>
      </div>
    </div>
  );
}
